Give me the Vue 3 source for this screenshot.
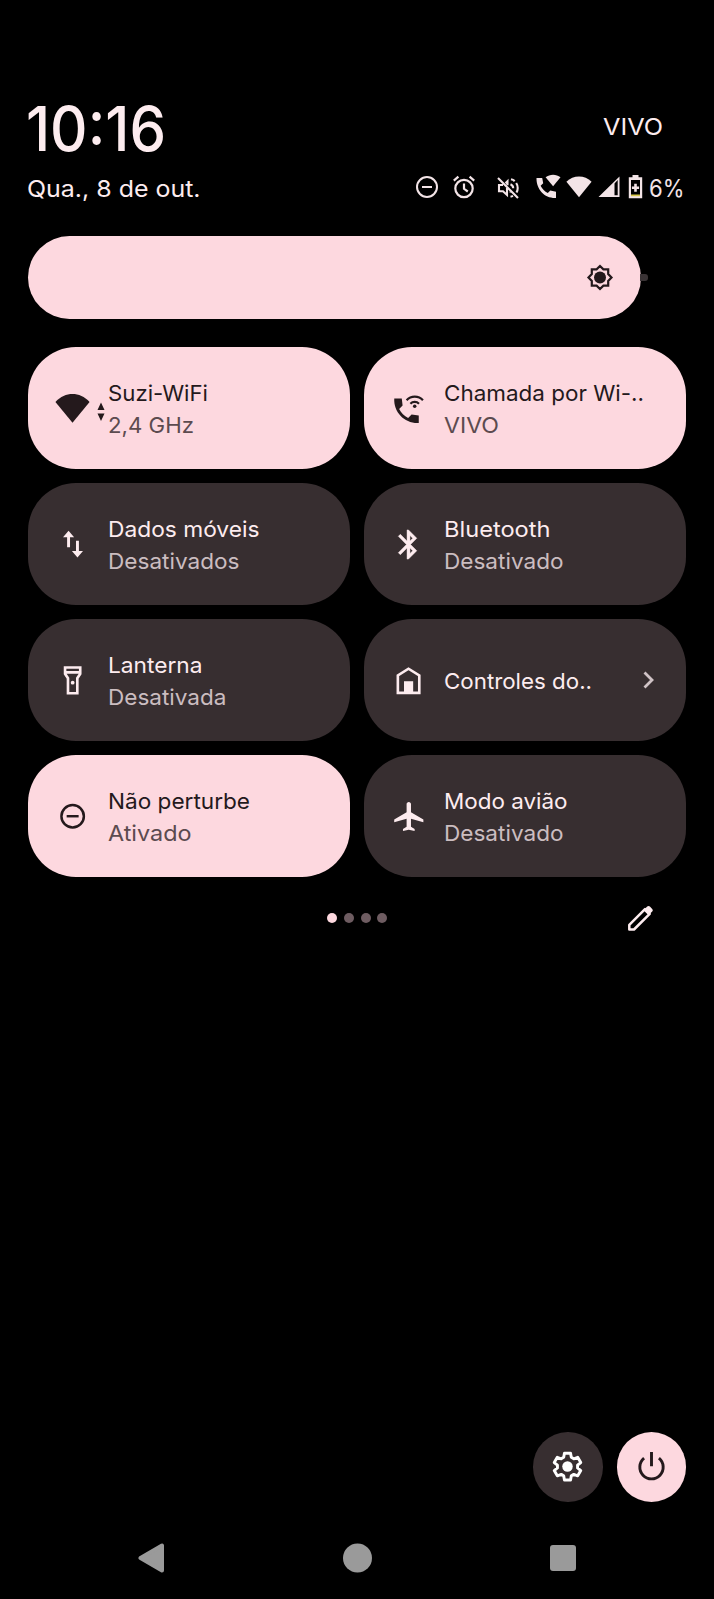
<script setup>
const tiles = [
  { icon: 'wifi', title: 'Suzi-WiFi', sub: '2,4 GHz', on: true, tw: 98, sw: 84 },
  { icon: 'call', title: 'Chamada por Wi-..', sub: 'VIVO', on: true, tw: 198, sw: 53 },
  { icon: 'data', title: 'Dados móveis', sub: 'Desativados', tw: 149.5, sw: 129.5 },
  { icon: 'bluetooth', title: 'Bluetooth', sub: 'Desativado', tw: 104.5, sw: 117.5 },
  { icon: 'torch', title: 'Lanterna', sub: 'Desativada', tw: 92.5, sw: 116.5 },
  { icon: 'home', title: 'Controles do..', chevron: true, tw: 146 },
  { icon: 'dnd', title: 'Não perturbe', sub: 'Ativado', on: true, tw: 140, sw: 81.5 },
  { icon: 'plane', title: 'Modo avião', sub: 'Desativado', tw: 121.5, sw: 117.5 },
]
</script>

<template>
  <main class="shade">
    <header class="top">
      <svg class="line time" width="150" height="60"><text x="-2" y="50" textLength="140" lengthAdjust="spacingAndGlyphs">10:16</text></svg>
      <svg class="line carrier" width="60" height="30"><text x="-1" y="21.500" textLength="60" lengthAdjust="spacingAndGlyphs">VIVO</text></svg>
    </header>

    <div class="status">
      <svg class="line date" width="180" height="32"><text x="-1" y="24" textLength="173.500" lengthAdjust="spacingAndGlyphs">Qua., 8 de out.</text></svg>
      <div class="icons">
        <svg class="s-dnd" width="24" height="24" fill="none" stroke="currentColor" stroke-width="2"><circle cx="12" cy="12" r="10" /><path d="M7 12h10" /></svg>
        <svg class="s-alarm" width="24" height="24" fill="none" stroke="currentColor" stroke-width="2.200"><circle cx="12" cy="13.500" r="8.700" /><path d="M12 8.500v5.300l3.800 2.700M1.800 5.600l4.600-3.900M22.200 5.600l-4.600-3.900" /></svg>
        <svg class="s-mute" width="24" height="24" fill="none" stroke="currentColor" stroke-width="2.100"><path d="M2 2l20 20M7 9H3v6.200h4l4 3.700V12M9.500 7.200L11.500 5.300v4" /><path d="M15 3.300c1.400.300 2.700.9 3.700 1.800M20.200 7c1 1.500 1.500 3.200 1.500 5 0 1.700-.4 3.200-1.200 4.600M14.500 8.300c1.700.8 2.700 2.200 2.700 4M14.500 20.800c.9-.200 1.700-.500 2.500-.9M14.500 15.500v1" /></svg>
        <svg class="s-call" width="25" height="25" fill="currentColor"><path d="M.500 4h5.700l1 5.200-2.600 2.500c1.700 3.400 4.100 5.800 7.200 7.400l2.500-2.600 5.700 1.200V24C8.700 24.500.200 15.500.500 4z" /><path d="M9.600 3.300c4.200-3.400 10.700-3.400 14.900 0l-7.400 8.900z" /></svg>
        <svg class="s-wifi" width="26" height="22" fill="currentColor"><path d="M.400 5.800C7.300-1.200 18.700-1.200 25.600 5.800L13 21.300z" /></svg>
        <svg class="s-signal" width="23" height="22" fill="currentColor"><path d="M21.500.500v20.600H.500zM16.500 7.500v11.800h3.200V4z" fill-rule="evenodd" /></svg>
        <svg class="s-battery" width="15" height="24"><path d="M4.500 0h6v2.300h3.700v21H.800V2.300h3.700z" fill="currentColor" /><path d="M3 5h9v16H3z" fill="#000" /><path d="M7.500 8.800v8M3.900 12.800h7.200" stroke="currentColor" stroke-width="2.600" /><path d="M3 19.500h9v1.700H3z" fill="#d9c94a" /></svg>
        <svg class="line percent" width="38" height="30"><text x="0" y="23" textLength="35.500" lengthAdjust="spacingAndGlyphs">6%</text></svg>
      </div>
    </div>

    <div class="brightness">
      <div class="fill">
        <svg width="28" height="28" viewBox="-14 -13.500 28 28"><path d="M0-11.500L3.400-8.200 8.200-8.200 8.200-3.400 11.500 0 8.200 3.400 8.200 8.200 3.400 8.200 0 11.500-3.400 8.200-8.200 8.200-8.200 3.400-11.500 0-8.200-3.400-8.200-8.200-3.400-8.200z" fill="none" stroke="currentColor" stroke-width="2.200" /><circle r="6" fill="currentColor" /></svg>
      </div>
      <div class="rest"></div>
    </div>

    <section class="tiles">
      <div v-for="t in tiles" :key="t.icon" class="tile" :class="{ on: t.on }">
        <svg class="glyph" viewBox="0 0 24 24">
          <path v-if="t.icon === 'wifi'" d="M.300 7.500C7.100.200 16.900.200 23.700 7.500L12 21.800z" fill="currentColor" />
          <g v-else-if="t.icon === 'call'" fill="currentColor">
            <path transform="translate(-.6 2.3) scale(.935)" d="M21 15.460l-5.270-.610-2.520 2.520c-2.830-1.440-5.150-3.750-6.590-6.590l2.530-2.530L8.540 3H3.030C2.450 13.180 10.820 21.550 21 20.970z" />
            <path d="M10.700 6.300a7.600 7.600 0 0 1 11.200 0M13.300 8.700a4.200 4.200 0 0 1 5.900 0" fill="none" stroke="currentColor" stroke-width="1.500" />
            <circle cx="16.250" cy="10.500" r="1.200" />
          </g>
          <g v-else-if="t.icon === 'data'" fill="none" stroke="currentColor" stroke-width="2">
            <path d="M9.300 13.800V4.500M15.400 9.500V19" />
            <path d="M5.500 7l3.800-4.400L13.100 7zM11.600 16.500l3.800 4.400 3.800-4.400z" fill="currentColor" stroke="none" />
          </g>
          <path v-else-if="t.icon === 'bluetooth'" fill="currentColor" stroke="currentColor" stroke-width=".3" d="M17.710 7.710L12 2h-1v7.590L6.410 5 5 6.410 10.590 12 5 17.590 6.410 19 11 14.410V22h1l5.710-5.710-4.300-4.290 4.300-4.290zM13 5.830l1.880 1.880L13 9.590V5.830zm1.880 10.460L13 18.170v-3.760l1.880 1.880z" />
          <g v-else-if="t.icon === 'torch'" fill="none" stroke="currentColor" stroke-width="1.800">
            <path d="M6.900 3.100h10.400v4.300l-2 3v10.300H8.900V10.400l-2-3zM6.900 6.400h10.400" /><circle cx="12.100" cy="13.500" r="1.300" fill="currentColor" stroke="none" />
          </g>
          <g v-else-if="t.icon === 'home'"><path d="M4.700 20.500V8.500L12 3.900l7.400 4.600v12z" fill="none" stroke="currentColor" stroke-width="1.800" /><path d="M8.900 12.500h6.300V21H8.900z" fill="currentColor" /></g>
          <g v-else-if="t.icon === 'dnd'" fill="none" stroke="currentColor" stroke-width="1.700"><circle cx="12.100" cy="11.800" r="7.700" /><path d="M8 11.800h8.200" /></g>
          <path v-else fill="currentColor" d="M22.200 16v-2l-8.500-5V3.500c0-.830-.670-1.500-1.500-1.500s-1.500.670-1.500 1.500V9L2.200 14v2l8.500-2.500V19L8.200 20.500V22l4-1 4 1v-1.500L13.700 19v-5.500L22.200 16z" />
        </svg>
        <svg class="traffic" width="8" height="20" viewBox="0 0 8 20"><path v-if="t.icon === 'wifi'" d="M4 .500L7.500 8h-7zM4 19L.500 11.500h7z" fill="currentColor" /></svg>
        <div class="labels">
          <svg class="line title" width="206" height="32"><text x="-1" y="24.500" :textLength="t.tw + 2" lengthAdjust="spacingAndGlyphs">{{ t.title }}</text></svg>
          <svg v-if="t.sub" class="line sub" width="206" height="32"><text x="-1" y="24.500" :textLength="t.sw + 2" lengthAdjust="spacingAndGlyphs">{{ t.sub }}</text></svg>
        </div>
        <svg v-if="t.chevron" class="chevron" width="14" height="20" viewBox="0 0 14 20"><path d="M2.500 2.500L10 10l-7.500 7.500" fill="none" stroke="currentColor" stroke-width="2.800" /></svg>
      </div>
    </section>

    <div class="pager">
      <div class="dots"><i class="active"></i><i></i><i></i><i></i></div>
      <svg class="pencil" width="28" height="28" fill="none" stroke="currentColor" stroke-width="2.500"><path d="M2.300 20.800L18 5.100l4.700 4.700L7 25.500H2.300z" stroke-linejoin="round" /><path d="M16.500 6.300l3.700-3.700c.8-.8 1.900-.8 2.700 0l2.300 2.300c.8.8.8 1.900 0 2.700L21.500 11.300z" fill="currentColor" stroke="none" /></svg>
    </div>

    <footer class="actions">
      <button class="round"><svg width="35" height="35" viewBox="0 0 24 24"><path d="M9.900 2.900h4.200l.5 2.800 1.700 1 2.700-1 2.100 3.600-2.200 1.800v1.900l2.200 1.800-2.100 3.600-2.700-1-1.700 1-.5 2.800H9.900l-.5-2.800-1.700-1-2.700 1-2.100-3.600 2.200-1.800v-1.900L2.900 9.300 5 5.700l2.700 1 1.700-1z" fill="none" stroke="currentColor" stroke-width="2" stroke-linejoin="round" /><circle cx="12" cy="12" r="3.600" fill="currentColor" /></svg></button>
      <button class="round power"><svg width="35" height="35" viewBox="0 0 24 24" fill="none" stroke="currentColor" stroke-width="2"><path d="M12 2v9.900M6.900 6.300a8 8 0 1 0 10.200 0" /></svg></button>
    </footer>

    <nav class="nav">
      <svg width="28" height="30"><path d="M2.500 15L24 2.500v25z" fill="currentColor" stroke="currentColor" stroke-width="4" stroke-linejoin="round" /></svg>
      <svg width="30" height="30"><circle cx="14.500" cy="15" r="14.500" fill="currentColor" /></svg>
      <svg width="26" height="26"><rect width="26" height="26" rx="3" fill="currentColor" /></svg>
    </nav>
  </main>
</template>

<style>
html, body { background: #000; }
</style>
<style scoped>
.shade {
  box-sizing: border-box;
  width: 714px;
  height: 1599px;
  padding: 101px 28px 0;
  background: #000;
  color: #fdecef;
  font-family: Inter, "Noto Sans", sans-serif;
  display: flex;
  flex-direction: column;
  overflow: hidden;
}
svg { display: block; flex: none; }
.line { overflow: visible; }
.line text { fill: currentColor; }
.top { display: flex; justify-content: space-between; height: 72px; }
.time { font-size: 62px; font-weight: 500; }
.carrier { margin: 12px 22px 0 0; font-size: 23.500px; }
.status { display: flex; justify-content: space-between; height: 63px; }
.date { font-size: 23.500px; }
.icons { display: flex; color: #f3e4e7; }
.s-dnd { margin-top: 2px; }
.s-alarm { margin: 1.500px 0 0 13.500px; }
.s-mute { margin: 2.500px 0 0 20px; }
.s-call { margin: 1px 0 0 16px; }
.s-wifi { margin: 3px 0 0 5px; }
.s-signal { margin: 3px 0 0 5.500px; }
.s-battery { margin: 2px 0 0 7px; }
.percent { margin: 1px -1px 0 6.500px; font-size: 24px; }
.brightness { display: flex; align-items: center; height: 83px; }
.fill {
  box-sizing: border-box;
  width: 613px;
  height: 83px;
  padding-right: 27.500px;
  border-radius: 42px;
  background: #fdd8df;
  color: #24191c;
  display: flex;
  align-items: center;
  justify-content: flex-end;
}
.rest { width: 8px; height: 7px; margin-left: -1px; border-radius: 0 3px 3px 0; background: #3a3335; }
.tiles { display: grid; grid-template-columns: 322px 322px; grid-auto-rows: 122px; gap: 14px; margin-top: 28px; }
.tile {
  display: flex;
  align-items: center;
  box-sizing: border-box;
  padding-left: 27.200px;
  border-radius: 48px;
  background: #372e30;
  color: #fdecef;
}
.tile.on { background: #fdd8df; color: #24191c; }
.glyph { width: 35px; height: 35px; }
.traffic { margin: 8px 3.500px 0 7px; }
.labels { width: 206px; font-size: 22px; }
.sub { color: #cbbdc0; }
.on .sub { color: #5c4b4f; }
.chevron { color: #d0c3c6; margin-left: -9px; }
.pager { display: flex; justify-content: space-between; align-items: center; height: 28px; margin-top: 27px; padding: 0 31.500px 0 299px; }
.dots { display: flex; gap: 6.800px; }
.dots i { width: 10px; height: 10px; border-radius: 50%; background: #6e5c61; }
.dots .active { background: #fdd8df; }
.actions { display: flex; justify-content: flex-end; gap: 14px; margin-top: 500px; }
.round {
  width: 69.500px;
  height: 69.500px;
  padding: 0;
  border: 0;
  border-radius: 50%;
  background: #372e30;
  color: #fff;
  display: flex;
  align-items: center;
  justify-content: center;
}
.power { background: #fdd8df; color: #24191c; }
.nav { display: flex; justify-content: space-between; align-items: center; height: 30px; margin-top: 41px; padding: 0 110px 0 109.500px; color: #9a9a9a; }
</style>
